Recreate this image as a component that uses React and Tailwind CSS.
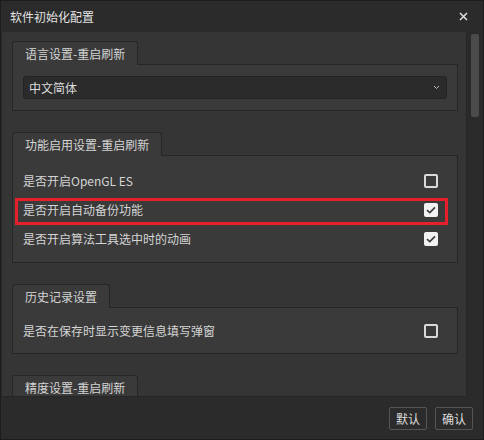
import React from "react";

const font = { fontFamily: '"Microsoft YaHei", "Noto Sans CJK SC", "Noto Sans", sans-serif' };

function CheckBox({ checked }) {
  if (checked) {
    return (
      <div className="w-[14px] h-[14px] rounded-[2px] bg-[#f2f2f2] flex items-center justify-center">
        <svg width="10" height="8" viewBox="0 0 10 8">
          <path d="M1 4.2 L3.8 6.6 L9 1.4" fill="none" stroke="#3a3a3a" strokeWidth="1.6" />
        </svg>
      </div>
    );
  }
  return <div className="w-[14px] h-[14px] rounded-[2px] border-2 border-[#d9d9d9]" />;
}

function Group({ title, children, bodyClass = "" }) {
  return (
    <div className="flex flex-col">
      <div className="relative z-10 self-start h-[24px] -mb-px px-[12px] flex items-center bg-[#3a3a3a] border border-b-0 border-[#262626] rounded-t-[3px] text-[12px] text-[#d4d4d4]">
        {title}
      </div>
      <div className={"bg-[#3a3a3a] border border-[#262626] " + bodyClass}>{children}</div>
    </div>
  );
}

function Row({ label, checked, marked }) {
  return (
    <div className="relative h-[29px] flex items-center justify-between pl-[10px] pr-[19px] text-[12px] text-[#d4d4d4]">
      <span>{label}</span>
      <CheckBox checked={checked} />
      {marked && (
        <div className="absolute left-[2px] right-[9px] top-[3px] -bottom-[1px] border-[3px] border-[#e5202a]" />
      )}
    </div>
  );
}

export default function App() {
  return (
    <div style={font} className="w-[484px] h-[440px] flex flex-col bg-[#2b2b2b] border border-[#1c1c1c] overflow-hidden">
      {/* title bar */}
      <div className="h-[31px] shrink-0 flex items-center justify-between pl-[9px] pr-[15px] text-[12px] text-[#e2e2e2]">
        <span>软件初始化配置</span>
        <svg width="9" height="9" viewBox="0 0 9 9">
          <path d="M1 1 L8 8 M8 1 L1 8" stroke="#e0e0e0" strokeWidth="1.5" />
        </svg>
      </div>

      {/* scroll area */}
      <div className="flex-1 min-h-0 flex pl-px">
        <div className="flex-1 bg-[#353535] border-r border-b border-[#262626] overflow-hidden pt-[9px] pl-[10px] pr-[8px] flex flex-col gap-[21px]">
          <Group title="语言设置-重启刷新" bodyClass="pt-[11px] pb-[11px] px-[10px]">
            <div className="h-[23px] flex items-center justify-between pl-[5px] pr-[6px] bg-[#2b2b2b] border border-[#232323] rounded-[3px] text-[12px] text-[#dcdcdc]">
              <span>中文简体</span>
              <svg width="7" height="5" viewBox="0 0 7 5">
                <path d="M1 1 L3.5 3.5 L6 1" fill="none" stroke="#bdbdbd" strokeWidth="1" />
              </svg>
            </div>
          </Group>

          <Group title="功能启用设置-重启刷新" bodyClass="pt-[10px] pb-[9px]">
            <Row label="是否开启OpenGL ES" checked={false} />
            <Row label="是否开启自动备份功能" checked marked />
            <Row label="是否开启算法工具选中时的动画" checked />
          </Group>

          <Group title="历史记录设置" bodyClass="pt-[8px] pb-[8px]">
            <Row label="是否在保存时显示变更信息填写弹窗" checked={false} />
          </Group>

          <Group title="精度设置-重启刷新" bodyClass="h-[60px]">
            <div />
          </Group>
        </div>

        {/* scrollbar */}
        <div className="w-[16px] shrink-0 bg-[#2a2a2a] pt-[2px] pl-[4px]">
          <div className="w-[8px] h-[83px] rounded-[2px] bg-[#4b4b4b]" />
        </div>
      </div>

      {/* footer */}
      <div className="h-[42px] shrink-0 flex items-center justify-end gap-[8px] pr-[10px] pt-[1px]">
        <button className="w-[38px] h-[23px] border border-[#555555] rounded-[2px] text-[12px] text-[#dcdcdc]">默认</button>
        <button className="w-[38px] h-[23px] border border-[#555555] rounded-[2px] text-[12px] text-[#dcdcdc]">确认</button>
      </div>
    </div>
  );
}
